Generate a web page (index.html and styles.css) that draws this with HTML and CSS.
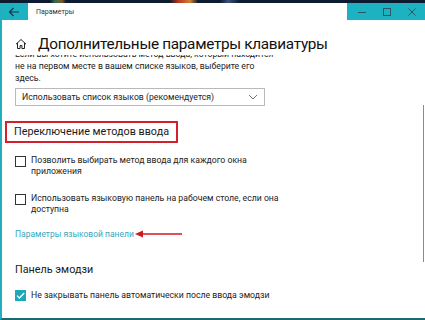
FILE: index.html
```html
<!DOCTYPE html>
<html lang="ru">
<head>
  <meta charset="UTF-8" />
  <title>Параметры</title>
  <link rel="stylesheet" href="styles.css">
</head>
<body>
  <div class="desktop"></div>
  <div class="window">
    <div class="titlebar">
      <div class="back">
        <svg width="12" height="10" viewBox="0 0 12 10"><path d="M11 5H1.5M5.5 1L1.5 5l4 4" fill="none" stroke="#1d3340" stroke-width="1.2"/></svg>
      </div>
      <div class="title">Параметры</div>
      <div class="controls">
        <svg width="10" height="10" viewBox="0 0 10 10"><path d="M1 5.5h8" stroke="#2c5660" stroke-width="1"/></svg>
        <svg width="10" height="10" viewBox="0 0 10 10"><rect x="1.5" y="1.5" width="7" height="7" fill="none" stroke="#2c5660" stroke-width="1"/></svg>
        <svg width="10" height="10" viewBox="0 0 10 10"><path d="M1.5 1.5l7 7M8.5 1.5l-7 7" stroke="#2c5660" stroke-width="1"/></svg>
      </div>
    </div>

    <div class="header">
      <svg class="home" width="12" height="12" viewBox="0 0 12 12"><path d="M1 6.2L6 1.5l5 4.7M2.5 5v5.5h2.6V7.5h1.8v3h2.6V5" fill="none" stroke="#222" stroke-width="1"/></svg>
      <h1>Дополнительные параметры клавиатуры</h1>
    </div>

    <div class="scroll">
      <p class="intro">Если вы хотите использовать метод ввода, который находится<br>не на первом месте в вашем списке языков, выберите его<br>здесь.</p>

      <div class="select">
        <span>Использовать список языков (рекомендуется)</span>
        <svg width="10" height="6" viewBox="0 0 10 6"><path d="M1 1l4 4 4-4" fill="none" stroke="#777" stroke-width="1"/></svg>
      </div>

      <h2 class="boxed">Переключение методов ввода</h2>

      <label class="check first">
        <span class="box"></span>
        <span class="text">Позволить выбирать метод ввода для каждого окна<br>приложения</span>
      </label>

      <label class="check second">
        <span class="box"></span>
        <span class="text">Использовать языковую панель на рабочем столе, если она<br>доступна</span>
      </label>

      <div class="link-row">
        <a href="#" class="link">Параметры языковой панели</a><svg class="arrow" width="48" height="8" viewBox="0 0 48 8"><path d="M47 4H6" stroke="#d0181f" stroke-width="1.6"/><path d="M0 4l8-3.5v7z" fill="#d0181f"/></svg>
      </div>

      <h2 class="section">Панель эмодзи</h2>

      <label class="check third">
        <span class="box checked">
          <svg width="11" height="11" viewBox="0 0 11 11"><path d="M2 5.6l2.4 2.4L9.2 3" fill="none" stroke="#fff" stroke-width="1.3"/></svg>
        </span>
        <span class="text">Не закрывать панель автоматически после ввода эмодзи</span>
      </label>
    </div>

    <div class="scrollbar"></div>
  </div>
</body>
</html>
```

FILE: styles.css
```css
body {
  margin: 0;
  width: 425px;
  height: 320px;
  overflow: hidden;
  font-family: Roboto, "Noto Sans", sans-serif;
  background: #0d1b30;
}
.desktop {
  height: 3px;
  background: linear-gradient(90deg, #0d1b30 0, #0d1b30 50px, #3a6a4a 55px, #7a5a2a 62px, #0d1b30 66px, #0d1b30 170px, #b8321f 178px, #d08030 190px, #0d1b30 198px, #0d1b30 220px, #37527a 228px, #0d1b30 240px);
}
.window {
  position: relative;
  height: 315px;
  background: #fff;
  border-left: 2px solid #22aebd;
  border-bottom: 2px solid #1c6a78;
  overflow: hidden;
}
.titlebar {
  display: flex;
  align-items: center;
  height: 17px;
  margin-left: -2px;
}
.back {
  width: 28px;
  height: 17px;
  background: #1cb2c1;
  display: flex;
  align-items: center;
  justify-content: center;
}
.title {
  flex: 1;
  padding-left: 8px;
  font-size: 7px;
  color: #333;
}
.controls {
  width: 76px;
  height: 17px;
  background: #1cb2c1;
  display: flex;
  align-items: center;
  justify-content: space-around;
  padding-left: 2px;
}
.header {
  display: flex;
  align-items: center;
  height: 20px;
  padding: 14px 0 1px 13px;
}
.home {
  margin-right: 11px;
}
h1 {
  margin: 0;
  font-weight: normal;
  font-size: 15.3px;
  line-height: 20px;
  letter-spacing: -0.3px;
  color: #111;
}
.scroll {
  height: 262px;
  overflow: hidden;
  padding-left: 13px;
}
.intro {
  margin: -7px 0 0;
  font-size: 8.7px;
  line-height: 12px;
  color: #222;
}
.select {
  margin-top: 4px;
  width: 236px;
  height: 16px;
  border: 1px solid #b9b9b9;
  display: flex;
  align-items: center;
  justify-content: space-between;
  padding: 0 6px;
  font-size: 8.7px;
  color: #222;
}
h2 {
  margin: 0;
  font-weight: normal;
  font-size: 10.8px;
  line-height: 18px;
  color: #1a1a1a;
}
.boxed {
  display: inline-block;
  margin: 15px 0 0 -10px;
  padding: 0 7px;
  border: 2px solid #d2212b;
}
.check {
  display: flex;
  align-items: flex-start;
  font-size: 8.7px;
  line-height: 11px;
  color: #222;
}
.check .box {
  flex: none;
  width: 9px;
  height: 9px;
  border: 1px solid #333;
  margin: 1px 5px 0 0;
  display: flex;
  align-items: center;
  justify-content: center;
}
.check .box.checked {
  background: #1fa7bb;
  border-color: #1fa7bb;
}
.check .box.checked svg {
  flex: none;
}
.first {
  margin-top: 12px;
}
.second {
  margin-top: 16px;
}
.link-row {
  margin-top: 13px;
  display: flex;
  align-items: center;
  height: 12px;
}
.link {
  font-size: 8.5px;
  line-height: 12px;
  color: #3aa7ba;
  text-decoration: none;
}
.arrow {
  margin-left: 1px;
}
.section {
  margin-top: 21px;
}
.third {
  margin-top: 11px;
}
.third .box {
  margin-top: 0;
}
.scrollbar {
  position: absolute;
  right: 1px;
  top: 102px;
  width: 1px;
  height: 157px;
  background: #8a8a8a;
}
```
